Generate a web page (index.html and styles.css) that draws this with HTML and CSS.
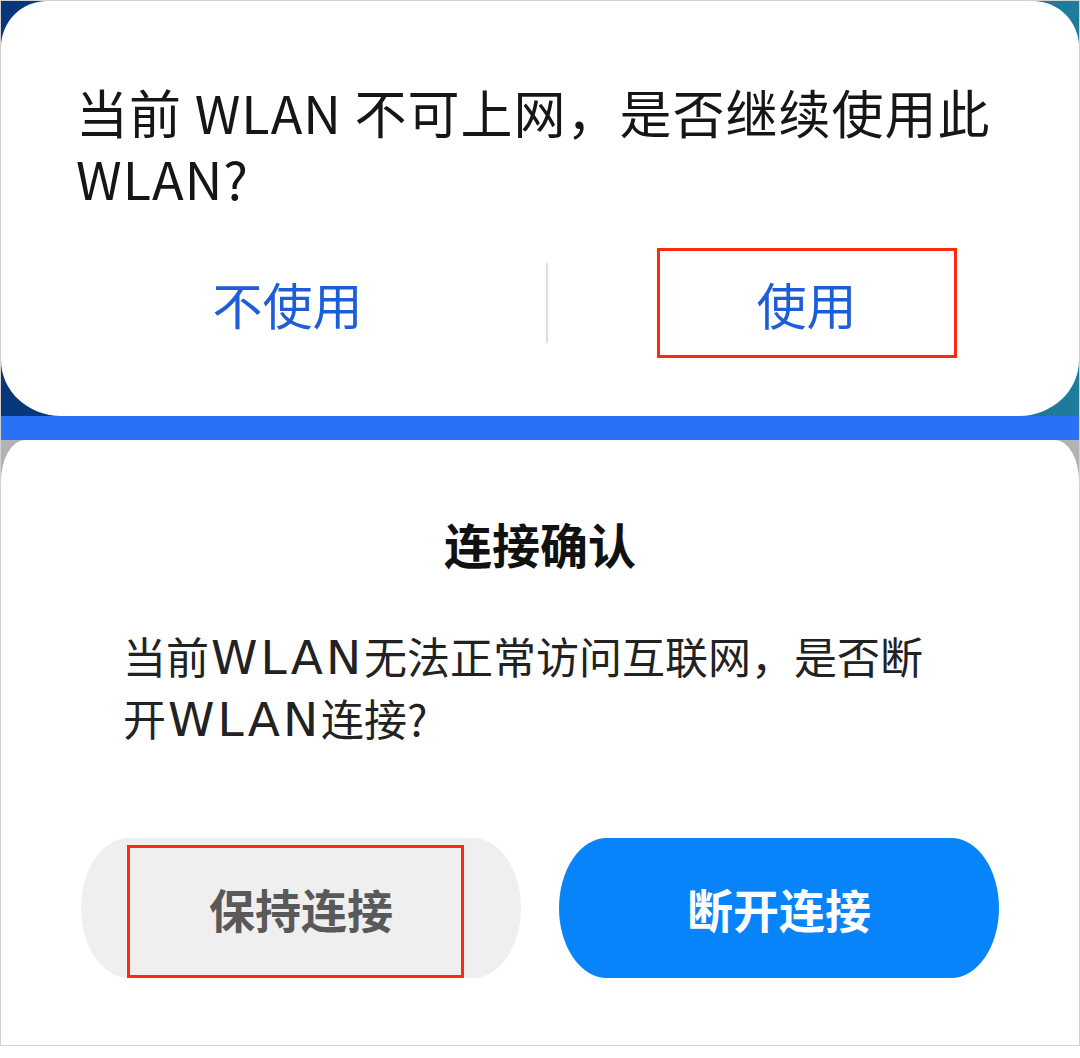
FILE: index.html
```html
<!DOCTYPE html>
<html lang="zh-CN">
<head>
  <meta charset="UTF-8" />
  <title>WLAN 提示</title>
  <link rel="stylesheet" href="styles.css">
</head>
<body>

  <div class="frame">
    <div class="top-area">
      <div class="dialog">
        <p class="dialog-text">当前 WLAN 不可上网，是否继续使用此 WLAN?</p>
        <div class="dialog-actions">
          <div class="action-cell action-left">
            <button class="text-btn">不使用</button>
          </div>
          <div class="divider"></div>
          <div class="action-cell action-right">
            <button class="text-btn marked">使用</button>
          </div>
        </div>
      </div>
    </div>

    <div class="band"></div>

    <div class="bottom-area">
      <div class="sheet">
        <h2 class="sheet-title">连接确认</h2>
        <p class="sheet-text">当前<span class="latin">WLAN</span>无法正常访问互联网，是否断开<span class="latin">WLAN</span>连接?</p>
        <div class="sheet-actions">
          <button class="pill pill-grey">
            保持连接
            <span class="mark"></span>
          </button>
          <button class="pill pill-blue">断开连接</button>
        </div>
      </div>
    </div>
  </div>

</body>
</html>
```

FILE: styles.css
```css
body {
  margin: 0;
  background: #fff;
  font-family: "Noto Sans CJK SC", "Noto Sans", sans-serif;
}

.frame {
  width: 1078px;
  height: 1044px;
  border: 1px solid #d2d2d2;
  display: flex;
  flex-direction: column;
  overflow: hidden;
}

/* top dialog */
.top-area {
  background: linear-gradient(90deg, #08367c, #0e4f86 60%, #1f7c9c);
}

.dialog {
  background: #fff;
  border-radius: 46px 46px 60px 60px / 46px 46px 56px 56px;
  padding: 78px 0 58px;
}

.dialog-text {
  margin: 0;
  padding: 0 70px 0 75px;
  font-size: 52px;
  line-height: 66px;
  letter-spacing: 1px;
  color: #161616;
}

.dialog-actions {
  display: flex;
  align-items: center;
  margin-top: 37px;
}

.action-cell {
  flex: 1;
  display: flex;
  justify-content: center;
}

.action-left {
  padding-left: 28px;
}

.action-right {
  padding-right: 14px;
}

.divider {
  width: 2px;
  height: 80px;
  background: #dedede;
}

.text-btn {
  font-family: inherit;
  font-size: 50px;
  color: #1d5ed8;
  background: none;
  border: 3px solid transparent;
  width: 300px;
  height: 110px;
  padding: 0;
}

.text-btn.marked {
  border-color: #fb2a10;
}

.band {
  height: 24px;
  background: #2a72f5;
}

/* bottom sheet */
.bottom-area {
  flex: 1;
  display: flex;
  background: #b3b3b3;
}

.sheet {
  flex: 1;
  background: #fff;
  border-radius: 24px 24px 0 0 / 42px 42px 0 0;
  padding: 74px 80px 0;
}

.sheet-title {
  margin: 0;
  text-align: center;
  font-size: 48px;
  line-height: 58px;
  font-weight: bold;
  color: #111;
}

.sheet-text {
  margin: 52px 0 0;
  padding-left: 42px;
  padding-right: 59px;
  font-size: 43px;
  line-height: 62px;
  color: #222;
}

.latin {
  display: inline-block;
  font-family: "DejaVu Sans", sans-serif;
  font-size: 47px;
  line-height: 1;
  letter-spacing: 3px;
  margin-left: 2px;
}

.sheet-actions {
  display: flex;
  gap: 38px;
  margin-top: 90px;
}

.pill {
  position: relative;
  flex: 1;
  height: 140px;
  border: none;
  border-radius: 48px / 70px;
  font-family: inherit;
  font-size: 46px;
  font-weight: bold;
}

.pill-grey {
  background: #efefef;
  color: #595959;
}

.pill-blue {
  background: #0884fb;
  color: #fff;
}

.mark {
  position: absolute;
  left: 46px;
  top: 7px;
  width: 331px;
  height: 127px;
  border: 3px solid #fb2a10;
}
```
